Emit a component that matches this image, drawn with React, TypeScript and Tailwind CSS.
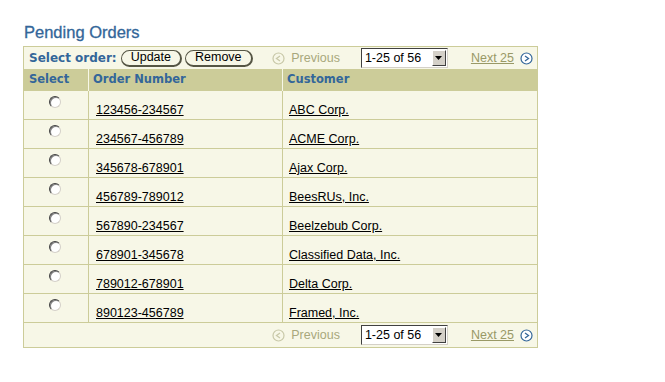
import React from "react";

const orders = [
  { number: "123456-234567", customer: "ABC Corp." },
  { number: "234567-456789", customer: "ACME Corp." },
  { number: "345678-678901", customer: "Ajax Corp." },
  { number: "456789-789012", customer: "BeesRUs, Inc." },
  { number: "567890-234567", customer: "Beelzebub Corp." },
  { number: "678901-345678", customer: "Classified Data, Inc." },
  { number: "789012-678901", customer: "Delta Corp." },
  { number: "890123-456789", customer: "Framed, Inc." },
];

const PrevIcon = () => (
  <svg width="13" height="13" viewBox="0 0 13 13">
    <circle cx="6.5" cy="6.5" r="5.5" fill="#f7f7e7" stroke="#c8c8a8" strokeWidth="1.2" />
    <path d="M8 4 L4.5 6.5 L8 9" fill="none" stroke="#c8c8a8" strokeWidth="1.3" />
  </svg>
);

const NextIcon = () => (
  <svg width="13" height="13" viewBox="0 0 13 13">
    <circle cx="6.5" cy="6.5" r="5.5" fill="#ffffff" stroke="#336699" strokeWidth="1.2" />
    <path d="M5 4 L8.5 6.5 L5 9" fill="none" stroke="#336699" strokeWidth="1.3" />
  </svg>
);

const Radio = () => (
  <span className="block w-[12px] h-[12px] rounded-full bg-white border border-t-[#404040] border-l-[#404040] border-r-[#d4d0c8] border-b-[#d4d0c8] shadow-[inset_1px_1px_0_#808080]" />
);

const RangeSelect = () => (
  <div className="flex items-center h-[20px] w-[87px] bg-white border border-t-[#404040] border-l-[#404040] border-r-[#d4d0c8] border-b-[#d4d0c8]">
    <span className="flex-1 pl-[3px] text-[12.5px] text-black leading-none">1-25 of 56</span>
    <span className="flex items-center justify-center w-[14px] h-[16px] mr-[1px] bg-[#d4d0c8] border border-t-white border-l-white border-r-[#404040] border-b-[#404040]">
      <svg width="7" height="4" viewBox="0 0 7 4">
        <path d="M0 0 H7 L3.5 4 Z" fill="#000" />
      </svg>
    </span>
  </div>
);

const Pager = () => (
  <div className="flex items-center">
    <PrevIcon />
    <span className="ml-[6px] text-[12.5px] text-[#a8a87c]">Previous</span>
    <span className="ml-[21px]">
      <RangeSelect />
    </span>
    <a className="ml-[23px] text-[12.5px] text-[#999966] underline">Next 25</a>
    <span className="ml-[6px]">
      <NextIcon />
    </span>
  </div>
);

const Button = ({ label }: { label: string }) => (
  <span className="inline-flex items-center h-[17px] px-[9px] rounded-full bg-[#f7f7e7] border border-[#555544] border-r-2 border-b-2 text-[12.5px] text-black leading-none">
    {label}
  </span>
);

export default function App() {
  return (
    <div className="min-h-screen bg-white pt-[22px] pl-[23px] font-['Liberation_Sans',Arial,sans-serif]">
      <h1 className="pl-[1px] text-[16.5px] leading-[20px] text-[#336699] [-webkit-text-stroke:0.3px_#336699]">
        Pending Orders
      </h1>

      <div className="mt-[4px] w-[515px] border border-[#cccc99] bg-[#f7f7e7]">
        {/* toolbar */}
        <div className="flex items-center h-[22px] pl-[5px] pr-[4px]">
          <span className="font-['DejaVu_Sans',sans-serif] font-bold text-[12px] text-[#336699]">Select order:</span>
          <span className="ml-[4px] flex gap-[3px]">
            <Button label="Update" />
            <Button label="Remove" />
          </span>
          <span className="ml-auto">
            <Pager />
          </span>
        </div>

        {/* header */}
        <div className="flex h-[22px] bg-[#cccc99] font-['DejaVu_Sans',sans-serif] font-bold text-[11.5px] text-[#336699]">
          <div className="w-[65px] pl-[5px] flex items-center border-r border-[#f7f7e7]">Select</div>
          <div className="w-[194px] pl-[4px] flex items-center border-r border-[#f7f7e7]">Order Number</div>
          <div className="flex-1 pl-[4px] flex items-center">Customer</div>
        </div>

        {/* rows */}
        {orders.map((o) => (
          <div key={o.number} className="flex h-[29px] border-b border-[#cccc99] text-[12.5px] leading-[15px] text-black">
            <div className="w-[65px] flex justify-center pt-[5px] pr-[2px] border-r border-[#cccc99]">
              <Radio />
            </div>
            <div className="w-[194px] pl-[7px] flex items-end pb-[1px] border-r border-[#cccc99]">
              <a className="underline">{o.number}</a>
            </div>
            <div className="flex-1 pl-[6px] flex items-end pb-[1px]">
              <a className="underline">{o.customer}</a>
            </div>
          </div>
        ))}

        {/* footer pager */}
        <div className="flex items-center justify-end h-[24px] pr-[4px]">
          <Pager />
        </div>
      </div>
    </div>
  );
}
